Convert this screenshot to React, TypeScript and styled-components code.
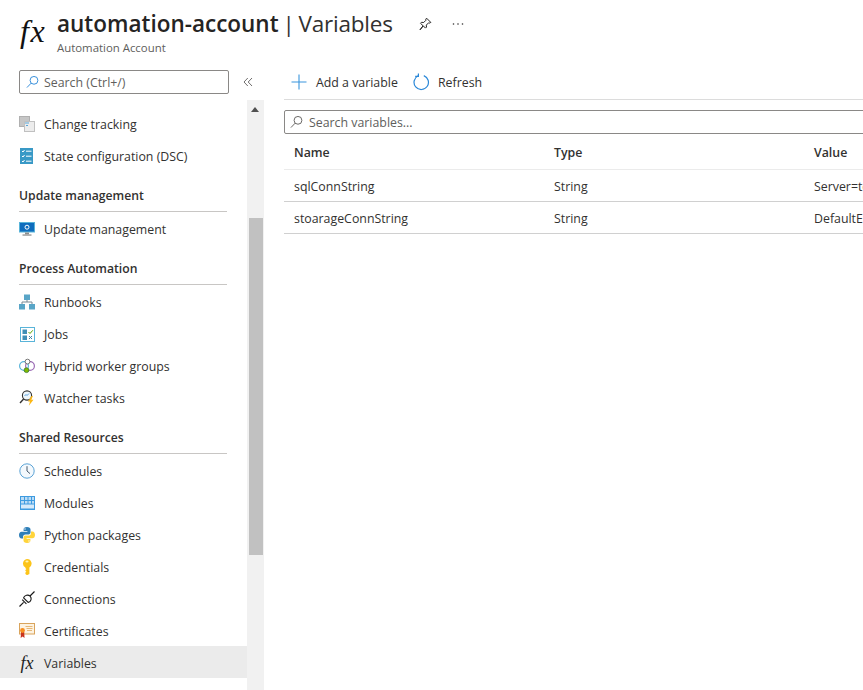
import { FC, ReactNode } from 'react';
import styled, { createGlobalStyle } from 'styled-components';

const GlobalStyle = createGlobalStyle`
  html, body {
    margin: 0;
    padding: 0;
    background: #fff;
  }
  * {
    box-sizing: border-box;
  }
`;

const Page = styled.div`
  width: 863px;
  height: 690px;
  overflow: hidden;
  font-family: 'Open Sans', 'Noto Sans', sans-serif;
  font-size: 12.35px;
  color: #323130;
  display: flex;
  flex-direction: column;
`;

const Header = styled.header`
  height: 70px;
  flex: none;
  display: flex;
  padding: 12px 0 0 20px;
`;

const HeaderFx = styled.div`
  width: 37px;
  height: 40px;
  flex: none;
  padding-top: 1px;
  font-family: 'Liberation Serif', serif;
  font-style: italic;
  font-size: 32px;
  line-height: 36px;
  letter-spacing: 1.5px;
  color: #111;
`;

const TitleBlock = styled.div`
  display: flex;
  flex-direction: column;
`;

const TitleRow = styled.div`
  display: flex;
  align-items: center;
  height: 24px;
`;

const Title = styled.h1`
  margin: 0;
  font-size: 22.5px;
  line-height: 24px;
  font-weight: 400;
  color: #323130;
  white-space: nowrap;
  letter-spacing: -0.2px;
  word-spacing: -1.8px;

  b {
    font-weight: 600;
    color: #252423;
    letter-spacing: 0;
  }
`;

const HeaderAction = styled.span<{ $gap: number }>`
  display: flex;
  margin-left: ${(p) => p.$gap}px;
  color: #323130;
`;

const Subtitle = styled.div`
  font-size: 11.4px;
  line-height: 15px;
  margin-top: 4px;
  color: #605e5c;
`;

const Body = styled.div`
  flex: 1;
  display: flex;
  min-height: 0;
`;

const Sidebar = styled.aside`
  width: 264px;
  flex: none;
  display: flex;
  flex-direction: column;
`;

const SideSearchRow = styled.div`
  height: 30px;
  flex: none;
  display: flex;
  align-items: flex-start;
`;

const SearchBox = styled.div<{ $width?: number; $pad?: number; $gap?: number }>`
  height: 24px;
  width: ${(p) => (p.$width ? `${p.$width}px` : '100%')};
  border: 1px solid #8a8886;
  border-radius: 2px;
  display: flex;
  align-items: center;
  gap: ${(p) => p.$gap ?? 6}px;
  padding-left: ${(p) => p.$pad ?? 6}px;
  color: #605e5c;
  flex: none;
`;

const SideSearchWrap = styled.div`
  padding-left: 19px;
  display: flex;
  align-items: center;
`;

const Collapse = styled.span`
  margin-left: 14px;
  color: #605e5c;
  display: flex;
`;

const SideScrollArea = styled.div`
  flex: 1;
  display: flex;
  min-height: 0;
`;

const Nav = styled.nav`
  width: 247px;
  flex: none;
  padding-top: 7px;
`;

const ScrollTrack = styled.div`
  width: 17px;
  flex: none;
  background: #f1f1f1;
  padding: 118px 1px 0 2px;
  position: relative;
`;

const ScrollUp = styled.span`
  position: absolute;
  top: 7px;
  left: 4px;
  width: 0;
  height: 0;
  border-left: 4px solid transparent;
  border-right: 4px solid transparent;
  border-bottom: 5px solid #505050;
`;

const ScrollThumb = styled.div`
  height: 337px;
  background: #c1c1c1;
`;

const NavRow = styled.div<{ $active?: boolean }>`
  height: 32px;
  display: flex;
  align-items: center;
  padding: 2px 0 0 19px;
  gap: 9px;
  background: ${(p) => (p.$active ? '#ebebeb' : 'transparent')};
  color: #323130;
  white-space: nowrap;
`;

const NavIcon = styled.span`
  width: 16px;
  height: 16px;
  flex: none;
  display: flex;
  align-items: center;
  justify-content: center;
`;

const SmallFx = styled.span`
  font-family: 'Liberation Serif', serif;
  font-style: italic;
  font-size: 18px;
  line-height: 16px;
  color: #222;
`;

const SectionTitle = styled.div`
  height: 33px;
  margin: 8px 20px 0 19px;
  padding-top: 8px;
  font-weight: 600;
  font-size: 12.2px;
  line-height: 18px;
  color: #323130;
  border-bottom: 1px solid #c8c6c4;
`;

const Main = styled.main`
  flex: 1;
  min-width: 0;
  padding-left: 20px;
  overflow: hidden;
`;

const Toolbar = styled.div`
  height: 30px;
  width: 640px;
  display: flex;
  align-items: flex-start;
  border-bottom: 1px solid #dcdcdc;
`;

const ToolButton = styled.div<{ $width: number; $gap: number }>`
  display: flex;
  align-items: center;
  height: 24px;
  gap: ${(p) => p.$gap}px;
  width: ${(p) => p.$width}px;
  padding-left: 7px;
  white-space: nowrap;
  color: #323130;
`;

const FilterRow = styled.div`
  margin-top: 10px;
  width: 640px;
`;

const Table = styled.div`
  width: 640px;
`;

const TableRow = styled.div<{ $head?: boolean }>`
  display: grid;
  grid-template-columns: 260px 260px 120px;
  height: ${(p) => (p.$head ? 36 : 32)}px;
  align-items: center;
  padding: 2px 0 0 10px;
  border-bottom: 1px solid ${(p) => (p.$head ? '#ebebeb' : '#d0d0d0')};
  font-weight: ${(p) => (p.$head ? 600 : 400)};
  white-space: nowrap;
  overflow: hidden;
`;

const PinIcon = () => (
  <svg width="14" height="14" viewBox="0 0 14 14" fill="none" stroke="#252423" strokeWidth="1">
    <path d="M8.6 1.2l4.2 4.2-1.1.7-1.1-.3-2.3 2.3.2 2-1 1-2.2-2.2-3.3 3.9 3.1-4-2.6-2.5 1-1 2.2.2L7.9 3.3l-.1-1.2z" />
  </svg>
);

const MoreIcon = () => (
  <svg width="12" height="4" viewBox="0 0 12 4" fill="#323130">
    <circle cx="1.5" cy="2" r="0.8" />
    <circle cx="6" cy="2" r="0.8" />
    <circle cx="10.5" cy="2" r="0.8" />
  </svg>
);

const SearchIcon: FC<{ color?: string }> = ({ color = '#2b88d8' }) => (
  <svg width="13" height="14" viewBox="0 0 14 14" fill="none" stroke={color} strokeWidth="1">
    <circle cx="8.6" cy="5.2" r="4.2" />
    <path d="M5.6 8.2L1 13" />
  </svg>
);

const ChevronsIcon = () => (
  <svg width="10" height="10" viewBox="0 0 10 10" fill="none" stroke="#605e5c" strokeWidth="0.9">
    <path d="M4.8 1L1 5l3.8 4M9 1L5.2 5 9 9" />
  </svg>
);

const PlusIcon = () => (
  <svg width="16" height="16" viewBox="0 0 16 16" stroke="#3a96dd" strokeWidth="1.1">
    <path d="M8 0.5v15M0.5 8h15" />
  </svg>
);

const RefreshIcon = () => (
  <svg width="17" height="18" viewBox="0 0 17 18" fill="none" stroke="#2b88d8" strokeWidth="1.2">
    <path d="M10.8 2.6A7.2 7.2 0 1 1 5.2 2.8" />
    <path d="M5.4 0.4L5.4 3.4L2.2 3.4" />
  </svg>
);

const ChangeIcon = () => (
  <svg width="16" height="16" viewBox="0 0 16 16">
    <rect x="0.5" y="0.5" width="10" height="10" fill="#c6c6c6" stroke="#b0b0b0" />
    <rect x="5.5" y="5.5" width="10" height="10" fill="#ececec" stroke="#c0c0c0" />
    <path d="M6 7h4M7 9.5h2" stroke="#59a5d8" strokeWidth="1.1" />
  </svg>
);

const StateIcon = () => (
  <svg width="14" height="16" viewBox="0 0 14 16">
    <rect width="13" height="16" fill="#3999c6" />
    <path d="M2 3l1 1 1.5-2M2 8l1 1 1.5-2M2 13l1 1 1.5-2M6 3.2h5.5M6 8.2h5.5M6 13.2h5.5" stroke="#fff" strokeWidth="1" fill="none" />
  </svg>
);

const UpdateIcon = () => (
  <svg width="16" height="14" viewBox="0 0 16 14">
    <rect x="0" y="0" width="16" height="10.5" fill="#59b4d9" />
    <rect x="1" y="1" width="14" height="8.5" fill="#0f6cbd" />
    <rect x="6" y="10.5" width="4" height="2" fill="#8c8c8c" />
    <rect x="3.5" y="12.3" width="9" height="1.5" fill="#a0a0a0" />
    <circle cx="8" cy="5.2" r="2" fill="none" stroke="#fff" strokeWidth="1" />
  </svg>
);

const RunbookIcon = () => (
  <svg width="16" height="16" viewBox="0 0 16 16">
    <rect x="5" y="0.5" width="6" height="5.5" fill="#59a5c7" />
    <rect x="0" y="10" width="6" height="5.5" fill="#59a5c7" />
    <rect x="10" y="10" width="6" height="5.5" fill="#59a5c7" />
    <path d="M8 6v2M3 10V8h10v2" stroke="#7a8a94" fill="none" />
  </svg>
);

const JobsIcon = () => (
  <svg width="15" height="15" viewBox="0 0 15 15">
    <rect x="0.5" y="0.5" width="14" height="14" fill="#fff" stroke="#59b4d9" />
    <rect x="2.5" y="2.5" width="4.5" height="4.5" fill="#3f8fb6" />
    <rect x="2.5" y="8.5" width="4.5" height="4.5" fill="#3f8fb6" />
    <path d="M8.5 5l1.5 1.5 2.8-3.2" stroke="#57a300" fill="none" />
    <path d="M9 9l3 3M12 9l-3 3" stroke="#3f7fa6" />
  </svg>
);

const HybridIcon = () => (
  <svg width="16" height="16" viewBox="0 0 16 16" fill="none">
    <circle cx="5" cy="8" r="4.4" stroke="#59b4d9" strokeWidth="1.2" />
    <circle cx="11" cy="8" r="4.4" stroke="#9b6bb5" strokeWidth="1.2" />
    <circle cx="8.5" cy="3.6" r="2.4" fill="#fff" stroke="#555" strokeWidth="0.8" />
    <circle cx="7.5" cy="12.2" r="2.4" fill="#7fba00" stroke="#3a7a30" strokeWidth="0.8" />
  </svg>
);

const WatcherIcon = () => (
  <svg width="16" height="16" viewBox="0 0 16 16" fill="none">
    <circle cx="8" cy="5.5" r="4.6" fill="#eef6fb" stroke="#333" strokeWidth="1.1" />
    <path d="M4.6 9L1 13" stroke="#333" strokeWidth="1.4" />
    <path d="M5.5 6l1.5-1.5 1 1 2-2" stroke="#2b88d8" strokeWidth="0.8" />
    <path d="M12.5 6l-3.5 5.5h2l-1.2 4.3 4.7-6h-2.2l1.6-3.8z" fill="#fcb714" />
  </svg>
);

const ClockIcon = () => (
  <svg width="16" height="16" viewBox="0 0 16 16" fill="#f4f9fd" stroke="#5ba3d6">
    <circle cx="8" cy="8" r="7.2" />
    <path d="M8 3.2V8l3 2.6" fill="none" stroke="#46586a" />
  </svg>
);

const ModulesIcon = () => (
  <svg width="15" height="14" viewBox="0 0 15 14">
    <rect width="15" height="14" fill="#3e9be0" />
    <path d="M1 1h3v3H1zM5 1h2.5v3H5zM8.5 1H11v3H8.5zM12 1h2v3h-2zM1 5h3v2.5H1zM5 5h2.5v2.5H5zM8.5 5H11v2.5H8.5zM12 5h2v2.5h-2z" fill="#bcdcf5" />
    <rect x="1" y="8.5" width="13" height="4" fill="#d6eafa" />
  </svg>
);

const PythonIcon = () => (
  <svg width="16" height="16" viewBox="0 0 16 16">
    <path d="M8 0C5.5 0 4.6 1 4.6 2.4V4H8.4v.7H2.6C1 4.7 0 6 0 8s1 3.6 2.6 3.6H4V9.8c0-1.4 1.1-2.4 2.4-2.4h3.3c1 0 1.8-.8 1.8-1.9V2.4C11.5 1 10.3 0 8 0z" fill="#2f7fb8" />
    <path d="M8 16c2.5 0 3.4-1 3.4-2.4V12H7.6v-.7h5.8C15 11.3 16 10 16 8s-1-3.6-2.6-3.6H12v1.8c0 1.4-1.1 2.4-2.4 2.4H6.3c-1 0-1.8.8-1.8 1.9v3.1C4.5 15 5.7 16 8 16z" fill="#ffd43b" />
    <circle cx="6" cy="2" r=".7" fill="#fff" />
    <circle cx="10" cy="14" r=".7" fill="#fff" />
  </svg>
);

const KeyIcon = () => (
  <svg width="10" height="16" viewBox="0 0 10 16">
    <path d="M5 0a4.6 4.6 0 0 1 2.4 8.5V15L5 16.2 3.4 15v-1.4l1-.8-1-.9v-1l1-.8-1-.8V8.6A4.6 4.6 0 0 1 5 0z" fill="#fcc419" />
    <ellipse cx="5" cy="2.6" rx="1.6" ry="1" fill="#fff3b0" />
  </svg>
);

const PlugIcon = () => (
  <svg width="16" height="16" viewBox="0 0 16 16" fill="none" stroke="#1a1a1a" strokeWidth="1.15">
    <path d="M0.5 15.5L4.6 11.4M11 5L15.5.5" />
    <path d="M4.6 6.8l4.6 4.6c1.3-.2 2.4-1.2 2.8-2.5.4-1.4 0-2.8-.9-3.7-.9-.9-2.3-1.3-3.6-.9-1.4.4-2.6 1.2-2.9 2.5z" />
    <path d="M3.2 8.6l4.2 4.2" />
  </svg>
);

const CertIcon = () => (
  <svg width="16" height="16" viewBox="0 0 16 16">
    <rect x="0.5" y="0.5" width="15" height="10.5" fill="#fdf3e1" stroke="#d9a45c" />
    <path d="M6.5 3.5h7M7.5 5.5h6M8 7.5h5" stroke="#e6b778" />
    <path d="M2 9l-.3 6 1.9-1.4 1.9 1.4L5.2 9z" fill="#c8321c" />
    <circle cx="3.5" cy="7.5" r="2.4" fill="#f78d1e" />
  </svg>
);

type NavEntry = { label: string; icon: ReactNode; active?: boolean };

const topItems: NavEntry[] = [
  { label: 'Change tracking', icon: <ChangeIcon /> },
  { label: 'State configuration (DSC)', icon: <StateIcon /> },
];

const sections: { title: string; items: NavEntry[] }[] = [
  {
    title: 'Update management',
    items: [{ label: 'Update management', icon: <UpdateIcon /> }],
  },
  {
    title: 'Process Automation',
    items: [
      { label: 'Runbooks', icon: <RunbookIcon /> },
      { label: 'Jobs', icon: <JobsIcon /> },
      { label: 'Hybrid worker groups', icon: <HybridIcon /> },
      { label: 'Watcher tasks', icon: <WatcherIcon /> },
    ],
  },
  {
    title: 'Shared Resources',
    items: [
      { label: 'Schedules', icon: <ClockIcon /> },
      { label: 'Modules', icon: <ModulesIcon /> },
      { label: 'Python packages', icon: <PythonIcon /> },
      { label: 'Credentials', icon: <KeyIcon /> },
      { label: 'Connections', icon: <PlugIcon /> },
      { label: 'Certificates', icon: <CertIcon /> },
      { label: 'Variables', icon: <SmallFx>fx</SmallFx>, active: true },
    ],
  },
];

const variables = [
  { name: 'sqlConnString', type: 'String', value: 'Server=tcp:automation' },
  { name: 'stoarageConnString', type: 'String', value: 'DefaultEndpointsProtocol' },
];

const NavItem: FC<NavEntry> = ({ label, icon, active }) => (
  <NavRow $active={active}>
    <NavIcon>{icon}</NavIcon>
    {label}
  </NavRow>
);

const App: FC = () => {
  return (
    <Page>
      <GlobalStyle />
      <Header>
        <HeaderFx>fx</HeaderFx>
        <TitleBlock>
          <TitleRow>
            <Title>
              <b>automation-account</b> | Variables
            </Title>
            <HeaderAction $gap={25}>
              <PinIcon />
            </HeaderAction>
            <HeaderAction $gap={20}>
              <MoreIcon />
            </HeaderAction>
          </TitleRow>
          <Subtitle>Automation Account</Subtitle>
        </TitleBlock>
      </Header>
      <Body>
        <Sidebar>
          <SideSearchRow>
            <SideSearchWrap>
              <SearchBox $width={210} $gap={5}>
                <SearchIcon />
                Search (Ctrl+/)
              </SearchBox>
              <Collapse>
                <ChevronsIcon />
              </Collapse>
            </SideSearchWrap>
          </SideSearchRow>
          <SideScrollArea>
            <Nav>
              {topItems.map((item) => (
                <NavItem key={item.label} {...item} />
              ))}
              {sections.map((section) => (
                <div key={section.title}>
                  <SectionTitle>{section.title}</SectionTitle>
                  {section.items.map((item) => (
                    <NavItem key={item.label} {...item} />
                  ))}
                </div>
              ))}
            </Nav>
            <ScrollTrack>
              <ScrollUp />
              <ScrollThumb />
            </ScrollTrack>
          </SideScrollArea>
        </Sidebar>
        <Main>
          <Toolbar>
            <ToolButton $width={122} $gap={9}>
              <PlusIcon />
              Add a variable
            </ToolButton>
            <ToolButton $width={120} $gap={8}>
              <RefreshIcon />
              Refresh
            </ToolButton>
          </Toolbar>
          <FilterRow>
            <SearchBox $pad={5} $gap={6}>
              <SearchIcon color="#605e5c" />
              Search variables...
            </SearchBox>
          </FilterRow>
          <Table>
            <TableRow $head>
              <span>Name</span>
              <span>Type</span>
              <span>Value</span>
            </TableRow>
            {variables.map((row) => (
              <TableRow key={row.name}>
                <span>{row.name}</span>
                <span>{row.type}</span>
                <span>{row.value}</span>
              </TableRow>
            ))}
          </Table>
        </Main>
      </Body>
    </Page>
  );
};

export default App;
